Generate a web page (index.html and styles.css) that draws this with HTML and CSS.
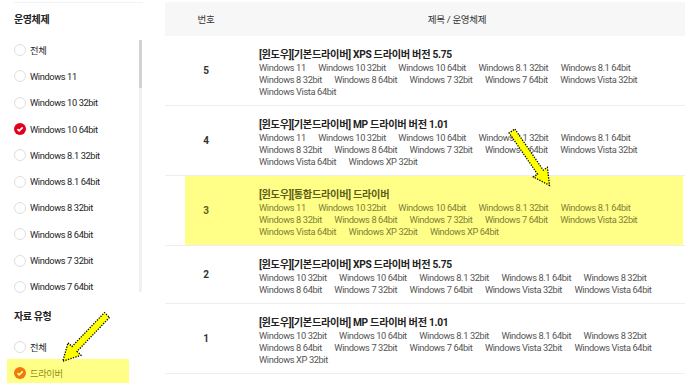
FILE: index.html
```html
<!DOCTYPE html>
<html lang="ko">
<head>
    <meta charset="UTF-8">
    <title>드라이버 자료실</title>
    <link rel="stylesheet" href="styles.css">
</head>
<body>
    <div class="page">
        <aside class="filter">
            <section class="group first">
                <h3>운영체제</h3>
                <div class="scroll">
                    <ul class="options">
                        <li><span class="radio"></span>전체</li>
                        <li><span class="radio"></span>Windows 11</li>
                        <li><span class="radio"></span>Windows 10 32bit</li>
                        <li class="on"><span class="radio"><svg viewBox="0 0 12 12"><path d="M3.4 6.1 L5.2 7.9 L8.7 4.3"/></svg></span>Windows 10 64bit</li>
                        <li><span class="radio"></span>Windows 8.1 32bit</li>
                        <li><span class="radio"></span>Windows 8.1 64bit</li>
                        <li><span class="radio"></span>Windows 8 32bit</li>
                        <li><span class="radio"></span>Windows 8 64bit</li>
                        <li><span class="radio"></span>Windows 7 32bit</li>
                        <li><span class="radio"></span>Windows 7 64bit</li>
                        <li><span class="radio"></span>Windows Vista 32bit</li>
                        <li><span class="radio"></span>Windows Vista 64bit</li>
                    </ul>
                    <div class="track"><div class="thumb"></div></div>
                </div>
            </section>
            <section class="group">
                <h3>자료 유형</h3>
                <ul class="options">
                    <li><span class="radio"></span>전체</li>
                    <li class="on"><span class="radio"><svg viewBox="0 0 12 12"><path d="M3.4 6.1 L5.2 7.9 L8.7 4.3"/></svg></span>드라이버<span class="hl-side"></span></li>
                </ul>
            </section>
        </aside>

        <main class="board">
            <div class="head">
                <div class="c-no">번호</div>
                <div class="c-title">제목 / 운영체제</div>
            </div>

            <div class="row">
                <div class="no">5</div>
                <div class="info">
                    <p class="title">[윈도우][기본드라이버] XPS 드라이버 버전 5.75</p>
                    <div class="os">
                        <span>Windows 11</span><span>Windows 10 32bit</span><span>Windows 10 64bit</span><span>Windows 8.1 32bit</span><span>Windows 8.1 64bit</span>
                        <span>Windows 8 32bit</span><span>Windows 8 64bit</span><span>Windows 7 32bit</span><span>Windows 7 64bit</span><span>Windows Vista 32bit</span>
                        <span>Windows Vista 64bit</span>
                    </div>
                </div>
            </div>

            <div class="row">
                <div class="no">4</div>
                <div class="info">
                    <p class="title">[윈도우][기본드라이버] MP 드라이버 버전 1.01</p>
                    <div class="os">
                        <span>Windows 11</span><span>Windows 10 32bit</span><span>Windows 10 64bit</span><span>Windows 8.1 32bit</span><span>Windows 8.1 64bit</span>
                        <span>Windows 8 32bit</span><span>Windows 8 64bit</span><span>Windows 7 32bit</span><span>Windows 7 64bit</span><span>Windows Vista 32bit</span>
                        <span>Windows Vista 64bit</span><span>Windows XP 32bit</span>
                    </div>
                </div>
            </div>

            <div class="row marked">
                <div class="no">3</div>
                <div class="info">
                    <p class="title">[윈도우][통합드라이버] 드라이버</p>
                    <div class="os">
                        <span>Windows 11</span><span>Windows 10 32bit</span><span>Windows 10 64bit</span><span>Windows 8.1 32bit</span><span>Windows 8.1 64bit</span>
                        <span>Windows 8 32bit</span><span>Windows 8 64bit</span><span>Windows 7 32bit</span><span>Windows 7 64bit</span><span>Windows Vista 32bit</span>
                        <span>Windows Vista 64bit</span><span>Windows XP 32bit</span><span>Windows XP 64bit</span>
                    </div>
                </div>
            </div>

            <div class="row">
                <div class="no">2</div>
                <div class="info">
                    <p class="title">[윈도우][기본드라이버] XPS 드라이버 버전 5.75</p>
                    <div class="os">
                        <span>Windows 10 32bit</span><span>Windows 10 64bit</span><span>Windows 8.1 32bit</span><span>Windows 8.1 64bit</span><span>Windows 8 32bit</span>
                        <span>Windows 8 64bit</span><span>Windows 7 32bit</span><span>Windows 7 64bit</span><span>Windows Vista 32bit</span><span>Windows Vista 64bit</span>
                    </div>
                </div>
            </div>

            <div class="row">
                <div class="no">1</div>
                <div class="info">
                    <p class="title">[윈도우][기본드라이버] MP 드라이버 버전 1.01</p>
                    <div class="os">
                        <span>Windows 10 32bit</span><span>Windows 10 64bit</span><span>Windows 8.1 32bit</span><span>Windows 8.1 64bit</span><span>Windows 8 32bit</span>
                        <span>Windows 8 64bit</span><span>Windows 7 32bit</span><span>Windows 7 64bit</span><span>Windows Vista 32bit</span><span>Windows Vista 64bit</span>
                        <span>Windows XP 32bit</span>
                    </div>
                </div>
            </div>
        </main>

        <!-- annotation arrows -->
        <svg class="arrows" viewBox="0 0 700 390">
            <g transform="translate(107 315) rotate(133.7)">
                <polygon points="0,-3.5 47,-3.5 47,-9 64,0 47,9 47,3.5 0,3.5"/>
            </g>
            <g transform="translate(512 131) rotate(55.4)">
                <polygon points="0,-3.5 50,-3.5 50,-8.5 66,0 50,8.5 50,3.5 0,3.5"/>
            </g>
        </svg>
    </div>
</body>
</html>
```

FILE: styles.css
```css
* {
    margin: 0;
    padding: 0;
    box-sizing: border-box;
}

body {
    font-family: Roboto, "Noto Sans CJK KR", sans-serif;
    color: #222;
    background: #fff;
}

ul {
    list-style: none;
}

.page {
    position: relative;
    display: flex;
    width: 700px;
    height: 390px;
    padding-top: 2px;
    overflow: hidden;
}

/* sidebar filter */

.filter {
    width: 165px;
    flex-shrink: 0;
    padding-left: 14px;
}

.group.first {
    width: 129px;
    border-top: 1px solid #f2f2f2;
}

.group h3 {
    font-size: 10px;
    font-weight: 700;
    line-height: 16px;
    padding-top: 9px;
    margin-bottom: 9px;
    letter-spacing: -0.4px;
}

.scroll {
    display: flex;
    width: 128px;
    height: 263px;
}

.scroll .options {
    flex: 1;
    overflow: hidden;
}

.track {
    width: 3px;
    margin: 3px 0 8px;
    background: #f0f0f0;
}

.thumb {
    height: 48px;
    background: #d2d2d2;
}

.options li {
    position: relative;
    display: flex;
    align-items: center;
    gap: 4px;
    height: 26.3px;
    font-size: 9.3px;
    letter-spacing: -0.4px;
    color: #1e1e1e;
}

.radio {
    display: flex;
    width: 12px;
    height: 12px;
    border: 1px solid #dedede;
    border-radius: 50%;
    flex-shrink: 0;
}

.on .radio {
    border: none;
    background: #e3001b;
}

.radio svg {
    width: 12px;
    height: 12px;
    fill: none;
    stroke: #fff;
    stroke-width: 1.7;
}

/* board list */

.board {
    width: 520px;
}

.head {
    display: grid;
    grid-template-columns: 82px 1fr;
    align-items: center;
    height: 34px;
    background: #f7f7f7;
    font-size: 9.5px;
    color: #333;
    letter-spacing: -0.3px;
}

.c-no {
    text-align: center;
}

.c-title {
    text-align: center;
    padding-right: 18px;
}

.row {
    display: grid;
    grid-template-columns: 82px 1fr;
    border-bottom: 1px solid #eee;
}

.no {
    display: flex;
    align-items: center;
    justify-content: center;
    font-size: 10px;
    font-weight: 700;
    color: #333;
}

.info {
    padding: 12px 15px 7px 12px;
}

.title {
    font-size: 10.2px;
    font-weight: 700;
    line-height: 13px;
    margin-bottom: 1px;
    letter-spacing: -0.3px;
}

.os {
    display: flex;
    flex-wrap: wrap;
    column-gap: 12.5px;
    font-size: 9.3px;
    line-height: 12px;
    color: #555;
    letter-spacing: -0.4px;
}

/* yellow annotations */

.row.marked {
    background: linear-gradient(90deg,
        #fff 20px, #ffff88 20px,
        #ffff88 calc(100% - 2px), #fff calc(100% - 2px));
}

.marked .no,
.marked .title {
    color: #5e5e16;
}

.marked .os {
    color: #808034;
}

.hl-side {
    position: absolute;
    top: -1px;
    left: -7px;
    width: 122px;
    height: 24px;
    background: rgba(255, 255, 0, 0.47);
    pointer-events: none;
}

.arrows {
    position: absolute;
    top: 0;
    left: 0;
    width: 700px;
    height: 390px;
    pointer-events: none;
}

.arrows polygon {
    fill: #ffff00;
    stroke: #000;
    stroke-width: 1.3;
    stroke-dasharray: 1.3 1.3;
}
```
